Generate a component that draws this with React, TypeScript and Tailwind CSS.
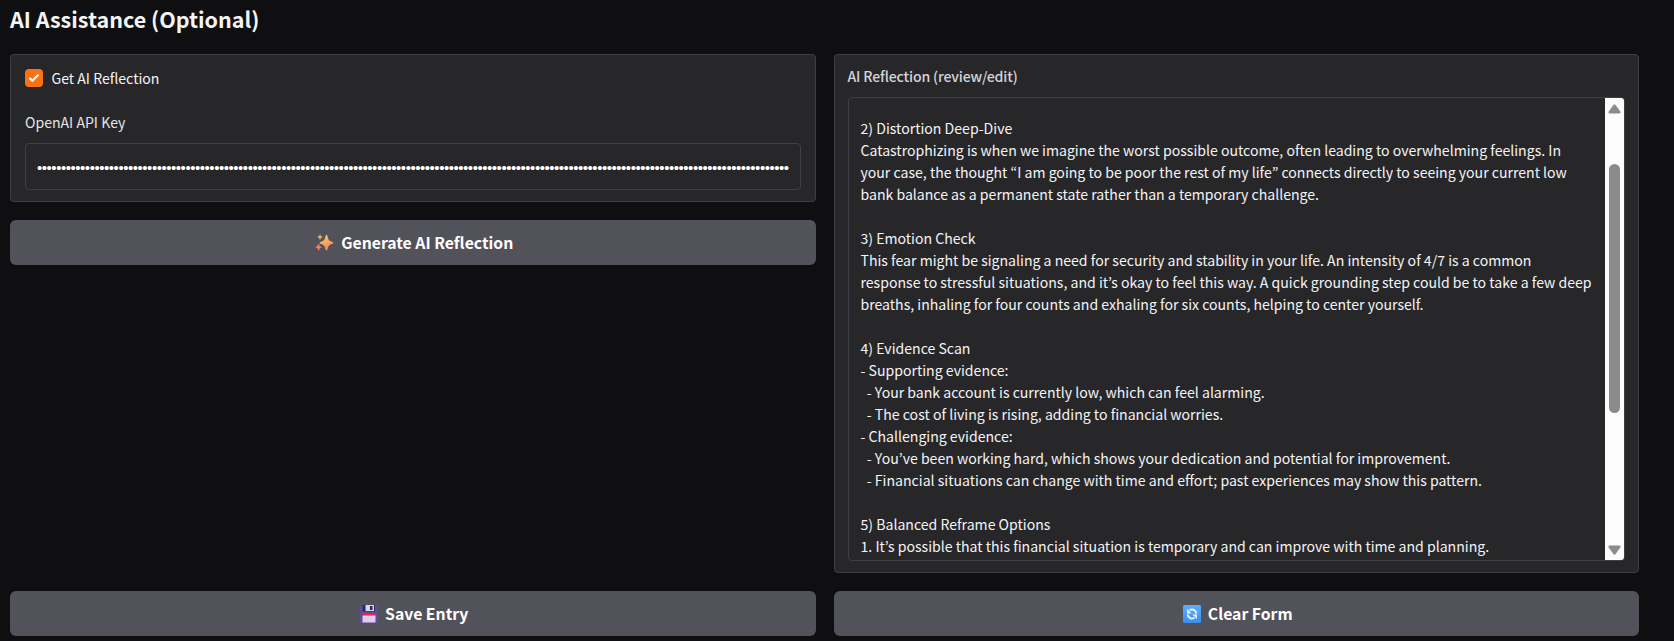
import { ReactNode } from 'react';

const REFLECTION_LINES = [
  '2) Distortion Deep-Dive',
  'Catastrophizing is when we imagine the worst possible outcome, often leading to overwhelming feelings. In',
  'your case, the thought “I am going to be poor the rest of my life” connects directly to seeing your current low',
  'bank balance as a permanent state rather than a temporary challenge.',
  '',
  '3) Emotion Check',
  'This fear might be signaling a need for security and stability in your life. An intensity of 4/7 is a common',
  'response to stressful situations, and it’s okay to feel this way. A quick grounding step could be to take a few deep',
  'breaths, inhaling for four counts and exhaling for six counts, helping to center yourself.',
  '',
  '4) Evidence Scan',
  '- Supporting evidence:',
  '  - Your bank account is currently low, which can feel alarming.',
  '  - The cost of living is rising, adding to financial worries.',
  '- Challenging evidence:',
  '  - You’ve been working hard, which shows your dedication and potential for improvement.',
  '  - Financial situations can change with time and effort; past experiences may show this pattern.',
  '',
  '5) Balanced Reframe Options',
  '1. It’s possible that this financial situation is temporary and can improve with time and planning.',
];

function Sparkles() {
  return (
    <svg width="19" height="18" viewBox="0 0 19 18">
      <defs>
        <linearGradient id="spark" x1="0" y1="0" x2="0.3" y2="1">
          <stop offset="0" stopColor="#fdd45c" />
          <stop offset="1" stopColor="#f4845f" />
        </linearGradient>
      </defs>
      <path fill="url(#spark)" d="M11.5 1c.6 0 .8.5 1 1.2.9 3.7 1.5 4.6 5 5.7 1.2.4 1.2 1.5 0 1.9-3.5 1.1-4.1 2-5 5.7-.3 1.2-1.7 1.2-2 0-.9-3.7-1.5-4.6-5-5.7-1.2-.4-1.2-1.5 0-1.9 3.5-1.1 4.1-2 5-5.7.2-.7.4-1.2 1-1.2z" />
      <path fill="#fbb25c" d="M5 .6c.4 1.6.7 2 2.3 2.5C5.7 3.6 5.4 4 5 5.6 4.6 4 4.3 3.6 2.7 3.1 4.3 2.6 4.6 2.2 5 .6z" stroke="#fbb25c" strokeWidth=".5" />
      <path fill="#f4845f" d="M3.6 10c.5 2 .9 2.6 2.9 3.2-2 .6-2.4 1.2-2.9 3.2-.5-2-.9-2.6-2.9-3.2 2-.6 2.4-1.2 2.9-3.2z" stroke="#f4845f" strokeWidth=".6" />
    </svg>
  );
}

function Floppy() {
  return (
    <svg width="18" height="18" viewBox="0 0 18 18">
      <path fill="#5d4b9c" d="M1.5 0h15L18 1.500v15l-1.500 1.500h-15L0 16.500v-15z" />
      <path fill="#35265f" d="M2.500 0h12.500v6.500h-12.500z" />
      <path fill="#d9d3e6" d="M5.500 0h8.500v6h-8.500z" />
      <path fill="#35265f" d="M10 1h2.500v4h-2.500z" />
      <path fill="#f0264f" d="M2.500 8.500h13v2h-13z" />
      <path fill="#e0cdec" d="M2.500 10.500h13v7h-13z" />
    </svg>
  );
}

function Refresh() {
  return (
    <svg width="18" height="18" viewBox="0 0 18 18">
      <defs>
        <linearGradient id="blue" x1="0" y1="0" x2="0" y2="1">
          <stop offset="0" stopColor="#5ab0fb" />
          <stop offset="1" stopColor="#3c8df0" />
        </linearGradient>
      </defs>
      <rect width="18" height="18" rx="1.5" fill="url(#blue)" />
      <g fill="none" stroke="#eaf2ff" strokeWidth="1.9">
        <path d="M6.500 5.200C9.500 3.400 13 5 13.300 8.600" />
        <path d="M11.500 12.800C8.500 14.600 5 13 4.700 9.400" />
      </g>
      <path fill="#eaf2ff" d="M4 3.800v4.600h4.600zM14 14.200v-4.600h-4.600z" />
    </svg>
  );
}

function Button({ icon, children }: { icon: ReactNode; children: ReactNode }) {
  return (
    <button className="flex h-[45px] w-full items-center justify-center gap-[7px] rounded-[6px] bg-[#52525b] pl-[3px] text-[15.75px] font-bold leading-none text-white">
      {icon}
      <span className="whitespace-nowrap">{children}</span>
    </button>
  );
}

export default function App() {
  return (
    <main className="h-[641px] w-full overflow-hidden bg-[#0f0f11] pl-[10px] pr-[35px] font-['Noto_Sans_CJK_KR','Noto_Sans',sans-serif] text-[14.09px] text-[#f4f4f5]">
      <h2 className="flex h-[54px] items-start pt-[5px] text-[21.5px] font-bold leading-[28px]">
        <span>AI Assistance (Optional)</span>
      </h2>
      <div className="grid grid-cols-2 gap-[18px]">
        <div className="flex flex-col gap-[18px]">
          <section className="flex h-[148px] flex-col rounded-[4px] border border-[#3f3f46] bg-[#27272a] px-[14px] pt-[14px]">
            <label className="flex h-[18px] items-center gap-[8.5px]">
              <span className="flex size-[18px] items-center justify-center rounded-[4px] bg-[#f97316]">
                <svg width="18" height="18" viewBox="0 0 16 16" fill="white">
                  <path d="M12.207 4.793a1 1 0 010 1.414l-5 5a1 1 0 01-1.414 0l-2-2a1 1 0 011.414-1.414L6.5 9.086l4.293-4.293a1 1 0 011.414 0z" />
                </svg>
              </span>
              <span className="leading-[18px]">Get AI Reflection</span>
            </label>
            <span className="mt-[24px] leading-[22px] text-[#e4e4e7]">OpenAI API Key</span>
            <div className="mt-[10px] flex h-[47px] items-center overflow-hidden rounded-[4px] border border-[#3f3f46] px-[11px]">
              <span className="mt-[2px] whitespace-nowrap font-['Liberation_Sans',sans-serif] text-[15px] leading-none tracking-[-0.464px] text-white">
                {'•'.repeat(157)}
              </span>
            </div>
          </section>
          <Button icon={<Sparkles />}>Generate AI Reflection</Button>
        </div>
        <section className="flex h-[519px] flex-col rounded-[4px] border border-[#3f3f46] bg-[#27272a] px-[13px] pt-[10px]">
          <span className="font-medium leading-[22px] tracking-[-0.15px] text-[#d4d4d8]">AI Reflection (review/edit)</span>
          <div className="mt-[10px] flex h-[464px] overflow-hidden rounded-[4px] border border-[#3f3f46]">
            <div className="min-w-0 flex-1 pl-[12px] pt-[19px]">
              {REFLECTION_LINES.map((line, i) => (
                <p key={i} className="h-[22px] whitespace-pre leading-[22px]">
                  {line}
                </p>
              ))}
            </div>
            <div className="flex w-[19px] shrink-0 flex-col items-center bg-[#fcfcfc]">
              <svg width="13" height="10" viewBox="0 0 13 10" className="mt-[6px] shrink-0">
                <path fill="#8b8b8b" d="M5.6.8q.9-1 1.8 0L12.3 7.5q.7 2-1 2H1.7q-1.7 0-1-2z" />
              </svg>
              <div className="mt-[50px] h-[249px] w-[11px] shrink-0 rounded-full bg-[#8b8b8b]" />
              <svg width="13" height="10" viewBox="0 0 13 10" className="mb-[5px] mt-auto shrink-0">
                <path fill="#8b8b8b" d="M5.6 9.200q.9 1 1.8 0L12.3 2.500q.7-2-1-2H1.700q-1.700 0-1 2z" />
              </svg>
            </div>
          </div>
        </section>
        <Button icon={<Floppy />}>Save Entry</Button>
        <Button icon={<Refresh />}>Clear Form</Button>
      </div>
    </main>
  );
}
